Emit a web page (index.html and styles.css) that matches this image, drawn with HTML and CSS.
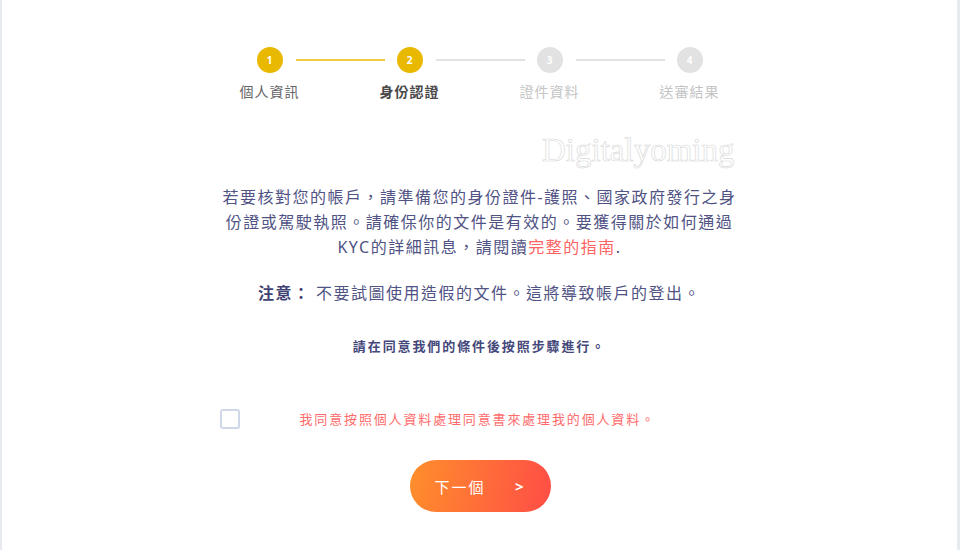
FILE: index.html
```
<!DOCTYPE html>
<html lang="zh-Hant">

<head>
    <meta charset="UTF-8">
    <meta name="viewport" content="width=device-width, initial-scale=1.0">
    <title>身份認證</title>
    <link rel="stylesheet" href="styles.css">
</head>

<body>

    <div class="card">
        <div class="steps">
            <span class="dot done">1</span>
            <span class="bar done"></span>
            <span class="dot done">2</span>
            <span class="bar"></span>
            <span class="dot">3</span>
            <span class="bar"></span>
            <span class="dot">4</span>
        </div>
        <div class="stepLabels">
            <span class="past">個人資訊</span>
            <span class="current">身份認證</span>
            <span>證件資料</span>
            <span>送審結果</span>
        </div>

        <div class="watermark">Digitalyoming</div>

        <div class="content">
            <p class="intro">若要核對您的帳戶，請準備您的身份證件-護照、國家政府發行之身份證或駕駛執照。請確保你的文件是有效的。要獲得關於如何通過KYC的詳細訊息，請閱讀<a href="#">完整的指南</a>.</p>
            <p class="notice"><b>注意：</b> 不要試圖使用造假的文件。這將導致帳戶的登出。</p>
            <p class="hint">請在同意我們的條件後按照步驟進行。</p>

            <label class="agree">
                <input type="checkbox">
                <span class="box"></span>
                <span class="agreeText">我同意按照個人資料處理同意書來處理我的個人資料。</span>
            </label>
        </div>

        <div class="actions">
            <button class="next"><span>下一個</span><span class="arrow">&gt;</span></button>
        </div>
    </div>

</body>

</html>
```

FILE: styles.css
```
body {
    margin: 0;
    background-color: #e6e9ee;
    font-family: "Noto Sans", "Noto Sans CJK TC", sans-serif;
}

.card {
    position: relative;
    margin: 0 3px 0 2px;
    min-height: 100vh;
    background-color: #fff;
    overflow: hidden;
}

.steps {
    display: flex;
    justify-content: center;
    align-items: center;
    padding-top: 47px;
}

.dot {
    width: 26px;
    height: 26px;
    border-radius: 50%;
    background-color: #e2e2e2;
    color: #fff;
    font-size: 10px;
    font-weight: 700;
    display: flex;
    justify-content: center;
    align-items: center;
}

.dot.done {
    background-color: #e9b800;
}

.bar {
    width: 89px;
    height: 2px;
    margin: 0 12px 0 13px;
    background-color: #e2e2e2;
}

.bar.done {
    background-color: #f5c842;
}

.stepLabels {
    display: flex;
    justify-content: center;
    margin-top: 9px;
}

.stepLabels span {
    width: 140px;
    text-align: center;
    font-size: 14px;
    line-height: 20px;
    letter-spacing: 1px;
    color: #c4c4c4;
}

.stepLabels .past {
    color: #666;
}

.stepLabels .current {
    color: #4a4a4a;
    font-weight: 700;
}

.watermark {
    position: absolute;
    left: 540px;
    top: 134px;
    font-family: "Liberation Serif", serif;
    font-size: 33px;
    line-height: 33px;
    color: transparent;
    -webkit-text-stroke: 0.6px #d6d6d6;
}

.content {
    width: 520px;
    margin: 83px auto 0;
    color: #505384;
    text-align: center;
}

.content p {
    margin: 0;
}

.intro {
    font-size: 16px;
    line-height: 25px;
    letter-spacing: 1.5px;
}

.intro a {
    color: #ff6464;
    text-decoration: none;
}

.notice {
    margin-top: 21px !important;
    font-size: 16px;
    line-height: 25px;
    letter-spacing: 1.5px;
}

.notice b {
    color: #3f4272;
}

.hint {
    margin-top: 30px !important;
    font-size: 13px;
    line-height: 20px;
    font-weight: 700;
    letter-spacing: 1.9px;
    color: #45487a;
}

.agree {
    display: flex;
    align-items: center;
    margin-top: 53px;
    cursor: pointer;
}

.agree input {
    display: none;
}

.box {
    width: 16px;
    height: 16px;
    border: 2px solid #cfd8e8;
    border-radius: 3px;
}

.agreeText {
    margin-left: 60px;
    font-size: 13px;
    line-height: 20px;
    letter-spacing: 1.85px;
    color: #ff6b6b;
}

.actions {
    display: flex;
    justify-content: center;
    margin-top: 31px;
    padding-left: 1px;
}

.next {
    width: 141px;
    height: 52px;
    border: none;
    border-radius: 26px;
    padding: 0 27px 0 25px;
    display: flex;
    justify-content: space-between;
    align-items: center;
    background: linear-gradient(100deg, #ff8f2b, #ff4d46);
    color: #fff;
    font-family: "Noto Sans", "Noto Sans CJK TC", sans-serif;
    font-size: 15px;
    letter-spacing: 2px;
    cursor: pointer;
}

.next .arrow {
    font-weight: 700;
    letter-spacing: 0;
}
```
